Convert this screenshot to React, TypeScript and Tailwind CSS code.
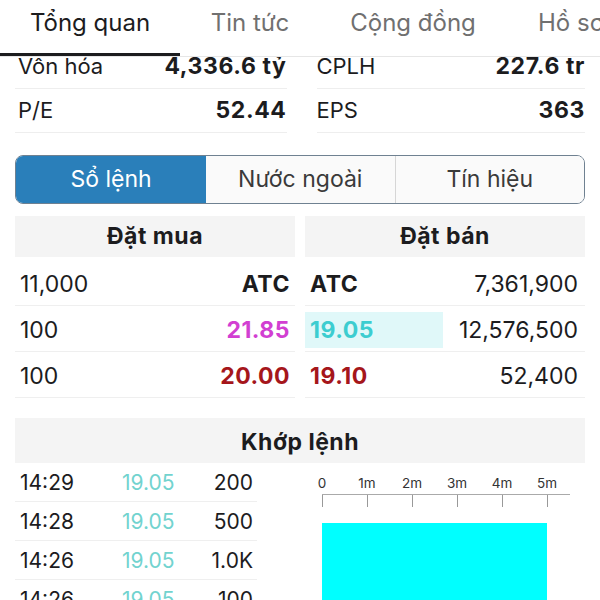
import React from "react";

const tabs = [
  { label: "Tổng quan", w: "w-[180px]" },
  { label: "Tin tức", w: "w-[140px]" },
  { label: "Cộng đồng", w: "w-[186px]" },
  { label: "Hồ sơ", w: "w-[130px]" },
];

const stats = [
  ["Vốn hóa", "4,336.6 tỷ", "CPLH", "227.6 tr"],
  ["P/E", "52.44", "EPS", "363"],
];

const bids = [
  { qty: "11,000", price: "ATC", color: "text-[#1c1c1e]" },
  { qty: "100", price: "21.85", color: "text-[#d23fd2]" },
  { qty: "100", price: "20.00", color: "text-[#a5161b]" },
];

const asks = [
  { price: "ATC", qty: "7,361,900", color: "text-[#1c1c1e]", hl: false },
  { price: "19.05", qty: "12,576,500", color: "text-[#3ccdd0]", hl: true },
  { price: "19.10", qty: "52,400", color: "text-[#a5161b]", hl: false },
];

const trades = [
  ["14:29", "19.05", "200"],
  ["14:28", "19.05", "500"],
  ["14:26", "19.05", "1.0K"],
  ["14:26", "19.05", "100"],
];

const ticks = ["0", "1m", "2m", "3m", "4m", "5m"];

function VolumeChart() {
  // x offset 17 inside the svg => 0 sits at page x 322
  return (
    <svg width="280" height="137" viewBox="0 0 280 137" className="block">
      {ticks.map((t, i) => (
        <g key={t}>
          <text
            x={17 + i * 45}
            y={25}
            textAnchor="middle"
            fontSize="13.5"
            fill="#333"
            fontFamily="Inter, sans-serif"
          >
            {t}
          </text>
          <line x1={17.5 + i * 45} y1={31} x2={17.5 + i * 45} y2={44} stroke="#999" strokeWidth="1" />
        </g>
      ))}
      <line x1="17" y1="31.5" x2="265" y2="31.5" stroke="#aaa" strokeWidth="1" />
      <rect x="17" y="60" width="225" height="80" fill="#00ffff" />
    </svg>
  );
}

export default function App() {
  return (
    <div className="w-[600px] h-[600px] overflow-hidden bg-white font-['Inter',sans-serif] text-[#1c1c1e]">
      {/* top tabs */}
      <div className="relative z-10 flex h-[57px] border-b border-[#e6e6e6] bg-white whitespace-nowrap">
        {tabs.map((t, i) => (
          <div
            key={t.label}
            className={
              i === 0
                ? `${t.w} shrink-0 border-b-[3px] border-[#1c1c1e] pt-[8px] text-center text-[24px] leading-[30px] text-[#1c1c1e]`
                : `${t.w} shrink-0 pt-[8px] text-center text-[24px] leading-[30px] text-[#707070]`
            }
          >
            {t.label}
          </div>
        ))}
      </div>

      <div className="h-[543px] overflow-hidden">
        <div className="-mt-[12px]">
          {/* stats */}
          <div className="px-[15px]">
            {stats.map((r) => (
              <div key={r[0]} className="flex gap-[30px]">
                <div className="flex h-[44px] flex-1 items-center justify-between border-b border-[#eeeeee] pl-[3px] text-[22px]">
                  <span>{r[0]}</span>
                  <span className="text-[23px] font-bold tracking-[0.6px]">{r[1]}</span>
                </div>
                <div className="flex h-[44px] flex-1 items-center justify-between border-b border-[#eeeeee] text-[22px]">
                  <span>{r[2]}</span>
                  <span className="text-[23px] font-bold tracking-[0.6px]">{r[3]}</span>
                </div>
              </div>
            ))}
          </div>

          {/* segmented control */}
          <div className="mx-[15px] mt-[22px] flex h-[49px] overflow-hidden rounded-[8px] border-[1.5px] border-[#6f8191] text-[23px]">
            <div className="flex w-[190px] items-center justify-center bg-[#2a7fba] text-white">Sổ lệnh</div>
            <div className="flex flex-1 items-center justify-center border-r border-[#d6d6d6] bg-[#fafafa] text-[#3a3a3a]">
              Nước ngoài
            </div>
            <div className="flex flex-1 items-center justify-center bg-[#fafafa] text-[#3a3a3a]">Tín hiệu</div>
          </div>

          {/* order book */}
          <div className="mt-[12px] flex gap-[10px] px-[15px]">
            <div className="flex-1">
              <div className="flex h-[41px] items-center justify-center bg-[#f4f4f4] text-[23px] font-bold tracking-[0.5px]">
                Đặt mua
              </div>
              <div className="mt-[3px]">
                {bids.map((b, i) => (
                  <div key={i} className="flex h-[46px] items-center justify-between border-b border-[#efefef] pl-[5px] pr-[5px] pt-[3px] text-[23px]">
                    <span>{b.qty}</span>
                    <span className={`font-bold tracking-[0.5px] ${b.color}`}>{b.price}</span>
                  </div>
                ))}
              </div>
            </div>
            <div className="flex-1">
              <div className="flex h-[41px] items-center justify-center bg-[#f4f4f4] text-[23px] font-bold tracking-[0.5px]">
                Đặt bán
              </div>
              <div className="mt-[3px]">
                {asks.map((a, i) => (
                  <div key={i} className="flex h-[46px] items-center justify-between border-b border-[#efefef] pr-[7px] pt-[3px] text-[23px]">
                    <span
                      className={
                        a.hl
                          ? `flex h-[36px] w-[138px] items-center bg-[#e0f8f9] pl-[5px] font-bold tracking-[0.5px] ${a.color}`
                          : `pl-[5px] font-bold tracking-[0.5px] ${a.color}`
                      }
                    >
                      {a.price}
                    </span>
                    <span>{a.qty}</span>
                  </div>
                ))}
              </div>
            </div>
          </div>

          {/* matched orders */}
          <div className="mx-[15px] mt-[20px] flex h-[45px] items-center justify-center bg-[#f4f4f4] pt-[3px] text-[23px] font-bold tracking-[0.5px]">
            Khớp lệnh
          </div>
          <div className="flex px-[15px]">
            <div className="w-[242px]">
              {trades.map((t, i) => (
                <div key={i} className="flex h-[39px] items-center border-b border-[#efefef] pl-[5px] pr-[4px] pt-[2px] text-[21px]">
                  <span className="w-[102px]">{t[0]}</span>
                  <span className="flex-1 text-[#72d3cf]">{t[1]}</span>
                  <span>{t[2]}</span>
                </div>
              ))}
            </div>
            <div className="ml-[48px]">
              <VolumeChart />
            </div>
          </div>
        </div>
      </div>
    </div>
  );
}
